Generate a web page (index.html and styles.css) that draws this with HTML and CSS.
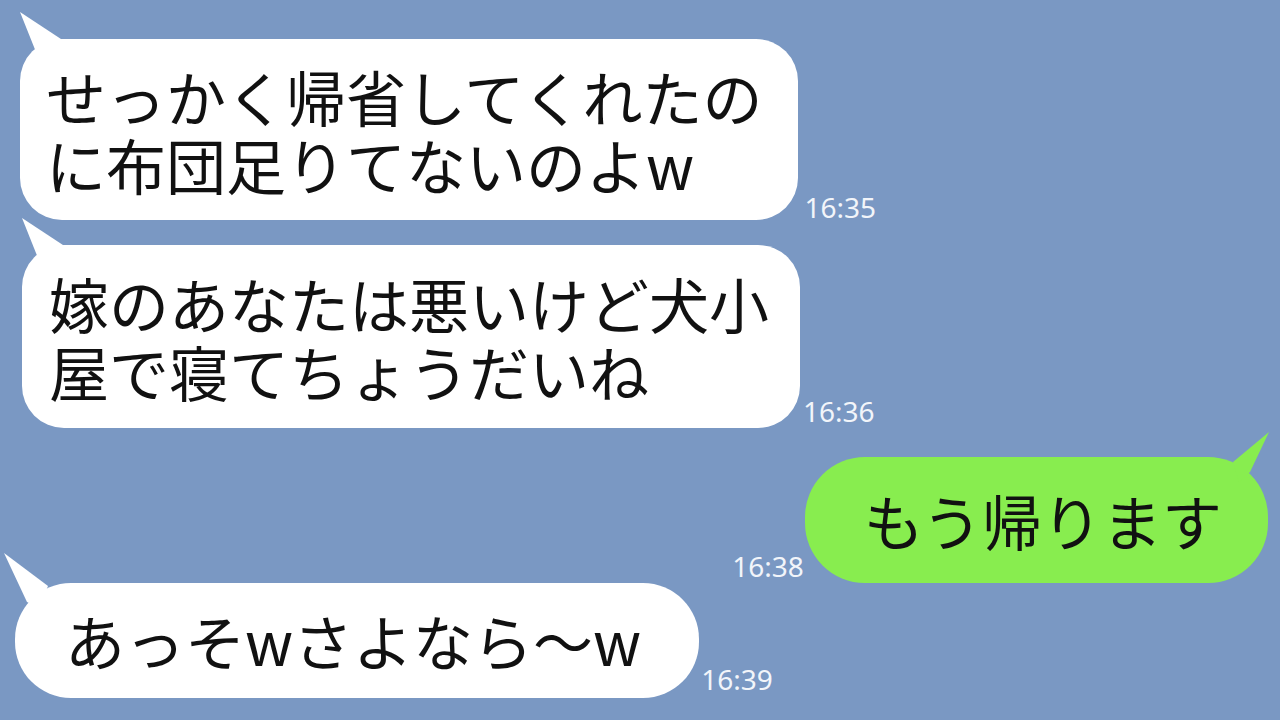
FILE: index.html
```html
<!DOCTYPE html>
<html lang="ja">
<head>
    <meta charset="UTF-8">
    <meta name="viewport" content="width=device-width, initial-scale=1.0">
    <title>トーク</title>
    <link rel="stylesheet" href="styles.css">
</head>
<body>
    <div class="chat">
        <div class="row row-1">
            <div class="bubble b1">せっかく帰省してくれたの<br>に布団足りてないのよw</div>
            <span class="time t1">16:35</span>
        </div>
        <div class="row row-2">
            <div class="bubble b2">嫁のあなたは悪いけど犬小<br>屋で寝てちょうだいね</div>
            <span class="time t2">16:36</span>
        </div>
        <div class="row row-3 me">
            <span class="time t3">16:38</span>
            <div class="bubble b3">もう帰ります</div>
        </div>
        <div class="row row-4">
            <div class="bubble b4">あっそwさよなら〜w</div>
            <span class="time t4">16:39</span>
        </div>
    </div>
</body>
</html>
```

FILE: styles.css
```css
body {
    margin: 0;
    background-color: #7a98c3;
    font-family: "Noto Sans CJK JP", "Noto Sans", sans-serif;
    width: 1280px;
    height: 720px;
    overflow: hidden;
}
.chat {
    display: flex;
    flex-direction: column;
    padding-top: 39px;
}
.row {
    display: flex;
    align-items: flex-end;
}
.row.me {
    justify-content: flex-end;
    padding-right: 12px;
}
.bubble {
    position: relative;
    background-color: #fff;
    color: #111;
    font-size: 60px;
    line-height: 68px;
    white-space: nowrap;
}
.bubble::before {
    content: "";
    position: absolute;
    background-color: inherit;
}
.time {
    font-family: "Noto Sans", sans-serif;
    font-size: 28px;
    line-height: 28px;
    color: #f2f5fa;
}

/* row 1 */
.row-1 {
    padding-left: 20px;
}
.b1 {
    padding: 23px 36px 22px 26px;
    border-radius: 42px;
}
.b1::before,
.b2::before {
    left: 0;
    top: -27px;
    width: 50px;
    height: 60px;
    clip-path: polygon(0 0, 44px 29px, 30px 55px, 18px 45px);
}
.t1 {
    margin-left: 6px;
    margin-bottom: -1px;
}

/* row 2 */
.row-2 {
    margin-top: 25px;
    padding-left: 22px;
}
.b2 {
    padding: 24px 31px 23px 27px;
    border-radius: 42px;
}
.t2 {
    margin-left: 3px;
    margin-bottom: 3px;
}

/* row 3 */
.row-3 {
    margin-top: 29px;
}
.b3 {
    background-color: #88ed4f;
    padding: 29px 46px 29px 59px;
    border-radius: 60px;
}
.b3::before {
    right: -1px;
    top: -25px;
    width: 50px;
    height: 60px;
    clip-path: polygon(100% 0, 14px 30px, 20px 50px, 31px 40px);
}
.t3 {
    margin-right: 1px;
    margin-bottom: 3px;
}

/* row 4 */
.row-4 {
    padding-left: 15px;
}
.b4 {
    padding: 23px 58px 24px 50px;
    border-radius: 56px;
}
.b4::before {
    left: -11px;
    top: -30px;
    width: 50px;
    height: 60px;
    clip-path: polygon(0 0, 44px 33px, 35px 55px, 23px 49px);
}
.t4 {
    margin-left: 2px;
    margin-bottom: 5px;
}
```
